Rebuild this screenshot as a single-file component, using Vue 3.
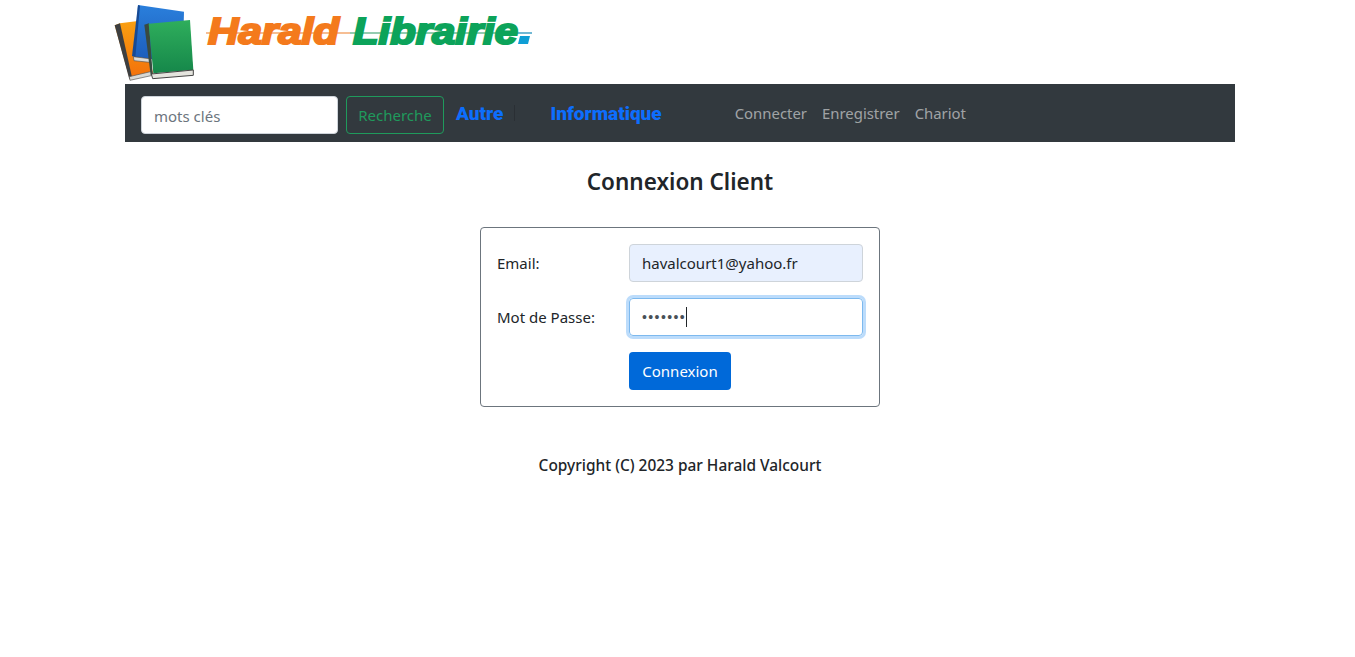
<template>
  <div class="page">
    <header class="logo-row">
      <svg class="logo" width="425" height="84" viewBox="0 0 425 84">
        <defs>
          <linearGradient id="orange" x1="0" y1="0" x2="0" y2="1">
            <stop offset="0" stop-color="#f9a012" />
            <stop offset="1" stop-color="#f36f0a" />
          </linearGradient>
          <linearGradient id="blue" x1="0" y1="0" x2="0" y2="1">
            <stop offset="0" stop-color="#2a7fdc" />
            <stop offset="1" stop-color="#1c5bb8" />
          </linearGradient>
          <linearGradient id="green" x1="0" y1="0" x2="0" y2="1">
            <stop offset="0" stop-color="#2fae5c" />
            <stop offset="1" stop-color="#15874a" />
          </linearGradient>
        </defs>
        <g transform="scale(0.3333)">
          <path d="M14 76 L30 70 L90 62 L130 222 L60 240 Z" fill="url(#orange)" />
          <path d="M14 76 L30 70 L66 232 L58 238 Z" fill="#3d3f41" />
          <path d="M58 230 L126 214 L128 226 L60 241 Z" fill="#d8d8d4" stroke="#555" stroke-width="2" />
          <path d="M84 15 L222 35 L218 190 L72 170 Z" fill="url(#blue)" />
          <path d="M84 15 L90 17 L76 172 L66 168 Z" fill="#174a94" />
          <path d="M70 170 L118 176 L118 187 L72 182 Z" fill="#dcdcd8" stroke="#555" stroke-width="2" />
          <path d="M103 74 L117 70 L128 222 L122 226 Z" fill="#3a4a40" />
          <path d="M116 71 L240 60 L250 210 L130 220 Z" fill="url(#green)" />
          <path d="M124 222 L250 210 L250 226 L128 236 Z" fill="#e4e4de" stroke="#444" stroke-width="3" />
        </g>
        <line x1="96" y1="33" x2="240" y2="33" stroke="#ee7f2b" stroke-width="1.2" />
        <line x1="240" y1="33" x2="400" y2="33" stroke="#2a9a63" stroke-width="1.2" />
        <line x1="400" y1="33" x2="422" y2="33" stroke="#1188b8" stroke-width="1.2" />
        <text class="logo-text orange" x="98" y="44" textLength="131" lengthAdjust="spacingAndGlyphs">Harald</text>
        <text class="logo-text green" x="243" y="44" textLength="165" lengthAdjust="spacingAndGlyphs">Librairie</text>
        <path d="M410 36 L420 36 L418 44 L408 44 Z" fill="#0f9ed5" />
      </svg>
    </header>

    <nav class="navbar">
      <form class="search" @submit.prevent>
        <input class="search-input" type="text" placeholder="mots clés" />
        <button class="search-btn" type="button">Recherche</button>
      </form>
      <a class="cat">Autre</a>
      <span class="sep"></span>
      <a class="cat">Informatique</a>
      <ul class="links">
        <li v-for="link in links" :key="link">{{ link }}</li>
      </ul>
    </nav>

    <h1 class="title">Connexion Client</h1>

    <form class="card" @submit.prevent>
      <div class="row">
        <label>Email:</label>
        <input class="field autofilled" type="text" value="havalcourt1@yahoo.fr" />
      </div>
      <div class="row">
        <label>Mot de Passe:</label>
        <div class="field focused">
          <span class="dots">•••••••</span><span class="caret"></span>
        </div>
      </div>
      <div class="row last">
        <label></label>
        <button class="submit" type="button">Connexion</button>
      </div>
    </form>

    <footer class="copy">Copyright (C) 2023 par Harald Valcourt</footer>
  </div>
</template>

<script setup>
const links = ['Connecter', 'Enregistrer', 'Chariot']
</script>

<style>
body {
  background: #fff;
}
</style>

<style scoped>
.page {
  width: 1110px;
  margin-left: 125px;
  font-family: "Noto Sans", "Open Sans", sans-serif;
  font-size: 15px;
  color: #212529;
}

.logo-row {
  height: 84px;
  margin-left: -15px;
}

.logo {
  display: block;
}

.logo-text {
  font-family: "Liberation Sans", sans-serif;
  font-size: 37px;
  font-weight: 700;
  font-style: italic;
  stroke-width: 2.2px;
}

.orange {
  fill: #f47a1c;
  stroke: #f47a1c;
}

.green {
  fill: #0ca35a;
  stroke: #0ca35a;
}

.navbar {
  box-sizing: border-box;
  display: flex;
  align-items: center;
  height: 58px;
  padding: 4px 16px 0;
  background: #32393e;
}

.search {
  display: flex;
  gap: 8px;
  margin-right: 12px;
}

.search-input {
  box-sizing: border-box;
  width: 197px;
  height: 38px;
  padding: 1px 12px 0;
  border: 1px solid #ced4da;
  border-radius: 4px;
  background: #fff;
  font: inherit;
}

.search-input::placeholder {
  color: #6c757d;
}

.search-btn {
  width: 98px;
  height: 38px;
  padding: 0;
  border: 1px solid #1f9a5c;
  border-radius: 4px;
  background: transparent;
  color: #1f9a5c;
  font: inherit;
}

.cat {
  margin-top: -4px;
  color: #0d6efd;
  font-family: Roboto, sans-serif;
  font-size: 19px;
  font-weight: 900;
}

.sep {
  width: 1px;
  height: 16px;
  margin: -4px 35px 0 11px;
  background: #2a2f34;
}

.links {
  display: flex;
  gap: 15px;
  margin: -5px 0 0 73px;
  padding: 0;
  list-style: none;
  font-size: 14.9px;
  color: rgba(255, 255, 255, 0.55);
}

.title {
  margin: 24px 0 0;
  font-size: 22.5px;
  line-height: 32px;
  font-weight: 600;
  text-align: center;
}

.card {
  box-sizing: border-box;
  width: 400px;
  height: 180px;
  margin: 29px auto 0;
  padding: 16px;
  border: 1px solid #6c757d;
  border-radius: 4px;
}

.row {
  display: flex;
  align-items: center;
  margin-bottom: 16px;
}

.row label {
  width: 132px;
  flex: none;
}

.field {
  box-sizing: border-box;
  display: flex;
  align-items: center;
  width: 234px;
  height: 38px;
  padding: 0 12px;
  border: 1px solid #ced4da;
  border-radius: 4px;
  color: #212529;
  font: inherit;
}

.autofilled {
  background: #e8f0fe;
}

.focused {
  border-color: #7db9ee;
  box-shadow: 0 0 0 3px rgba(13, 130, 240, 0.28);
}

.dots {
  font-family: "Liberation Sans", sans-serif;
  font-size: 14px;
  letter-spacing: 1.4px;
  color: #495057;
}

.caret {
  width: 1px;
  height: 20px;
  background: #212529;
}

.submit {
  width: 102px;
  height: 38px;
  padding: 0;
  border: 0;
  border-radius: 4px;
  background: #0069d9;
  color: #fff;
  font: inherit;
}

.copy {
  margin-top: 47px;
  font-size: 15.45px;
  font-weight: 500;
  text-align: center;
}
</style>
